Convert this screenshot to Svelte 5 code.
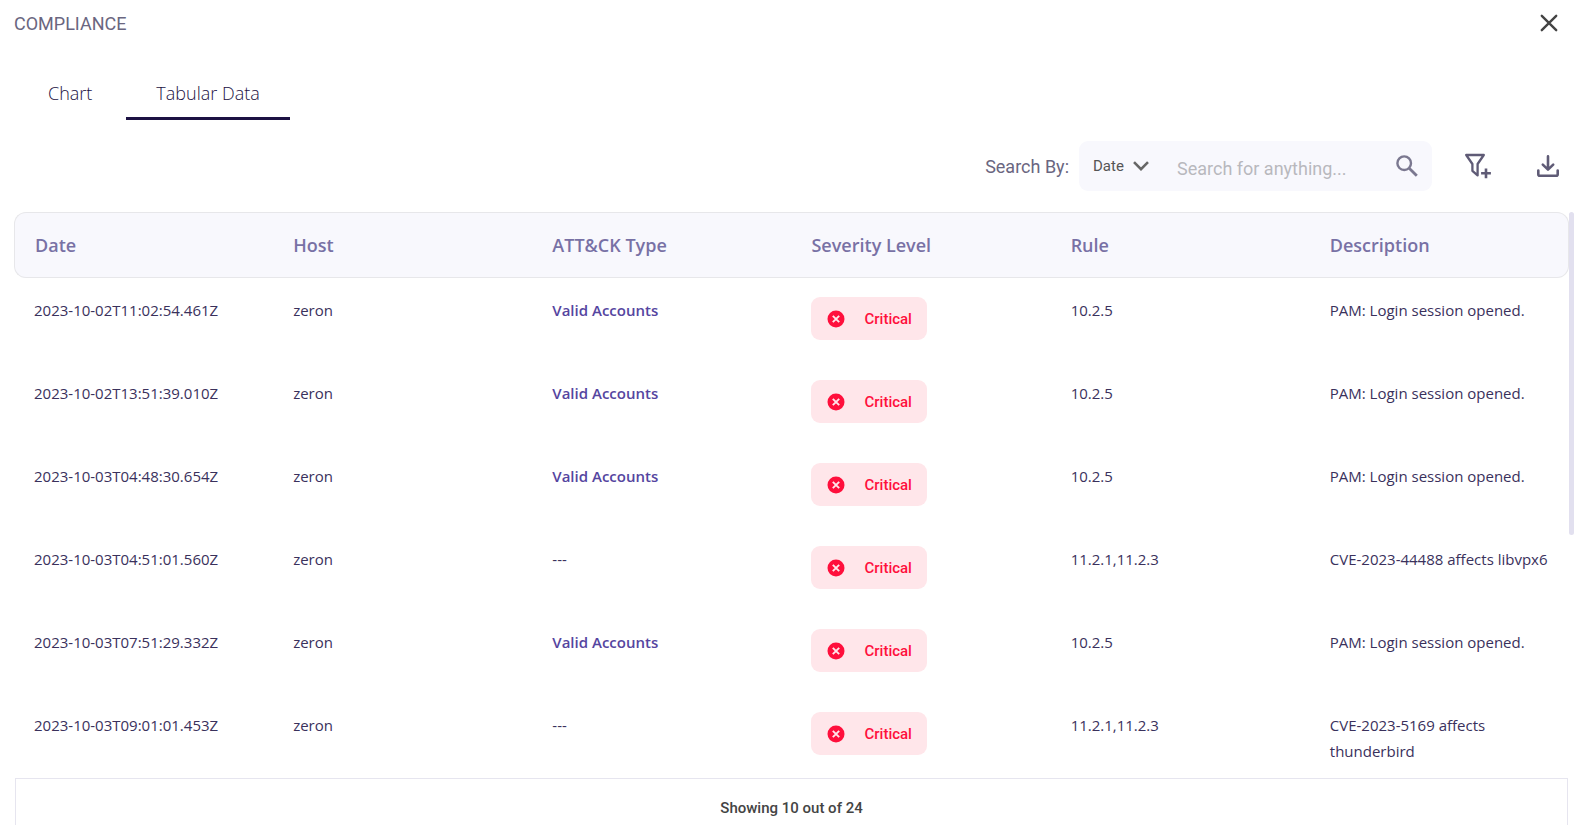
<script>
  const tabs = ['Chart', 'Tabular Data'];
  const columns = ['Date', 'Host', 'ATT&CK Type', 'Severity Level', 'Rule', 'Description'];

  const rows = [
    { date: '2023-10-02T11:02:54.461Z', host: 'zeron', type: 'Valid Accounts', severity: 'Critical', rule: '10.2.5', description: 'PAM: Login session opened.' },
    { date: '2023-10-02T13:51:39.010Z', host: 'zeron', type: 'Valid Accounts', severity: 'Critical', rule: '10.2.5', description: 'PAM: Login session opened.' },
    { date: '2023-10-03T04:48:30.654Z', host: 'zeron', type: 'Valid Accounts', severity: 'Critical', rule: '10.2.5', description: 'PAM: Login session opened.' },
    { date: '2023-10-03T04:51:01.560Z', host: 'zeron', type: null, severity: 'Critical', rule: '11.2.1,11.2.3', description: 'CVE-2023-44488 affects libvpx6' },
    { date: '2023-10-03T07:51:29.332Z', host: 'zeron', type: 'Valid Accounts', severity: 'Critical', rule: '10.2.5', description: 'PAM: Login session opened.' },
    { date: '2023-10-03T09:01:01.453Z', host: 'zeron', type: null, severity: 'Critical', rule: '11.2.1,11.2.3', description: 'CVE-2023-5169 affects thunderbird' }
  ];

  let activeTab = $state('Tabular Data');
  let searchBy = $state('Date');
  let query = $state('');
</script>

<div class="panel">
  <header class="panel-header">
    <h1>COMPLIANCE</h1>
    <button class="icon-btn" aria-label="Close">
      <svg width="18" height="18" viewBox="0 0 18 18" fill="none" stroke="#444" stroke-width="2.4" stroke-linecap="round">
        <path d="M1.8 1.8 16.2 16.2M16.2 1.8 1.8 16.2" />
      </svg>
    </button>
  </header>

  <nav class="tabs">
    {#each tabs as tab}
      <button class="tab" class:active={tab === activeTab} onclick={() => (activeTab = tab)}>{tab}</button>
    {/each}
  </nav>

  <div class="toolbar">
    <label for="search-by">Search By:</label>
    <div class="search-box">
      <div class="select-wrap">
        <select id="search-by" bind:value={searchBy}>
          <option>Date</option>
        </select>
        <svg width="16" height="10" viewBox="0 0 16 10" fill="none" stroke="#666" stroke-width="2.6">
          <path d="M1 1.2 8 8.2 15 1.2" />
        </svg>
      </div>
      <input type="text" aria-label="Search" placeholder="Search for anything..." bind:value={query} />
      <button class="icon-btn" aria-label="Search">
        <svg width="22" height="22" viewBox="0 0 22 22" fill="none" stroke="#7b7890" stroke-width="2.4">
          <circle cx="8.2" cy="8.2" r="6.8" />
          <path d="M13.2 13.2 20.8 20.8" stroke-width="2.8" />
        </svg>
      </button>
    </div>
    <button class="icon-btn filter" aria-label="Add filter">
      <svg width="28" height="26" viewBox="0 0 28 26" fill="none" stroke="#5f5b76" stroke-width="2.3">
        <path d="M2.2 2H19.8L13.6 11V22.4L8.4 17.8V11Z" stroke-linejoin="round" />
        <path d="M22 15.4V25.2M17.1 20.3H26.9" stroke-width="2.6" />
      </svg>
    </button>
    <button class="icon-btn" aria-label="Download">
      <svg width="22" height="22" viewBox="0 0 22 22" fill="none" stroke="#5f5b76" stroke-width="2.6" stroke-linecap="round" stroke-linejoin="round">
        <path d="M11 1.4V14M5.8 9.6 11 14.6 16.2 9.6" />
        <path d="M1.3 15.6V19.2Q1.3 20.7 2.8 20.7H19.2Q20.7 20.7 20.7 19.2V15.6" />
      </svg>
    </button>
  </div>

  <div class="table-area">
    <table>
      <thead>
        <tr>
          {#each columns as column}
            <th scope="col">{column}</th>
          {/each}
        </tr>
      </thead>
      <tbody>
        {#each rows as row}
          <tr>
            <td>{row.date}</td>
            <td>{row.host}</td>
            <td class:type={row.type}>{row.type ?? '---'}</td>
            <td>
              <span class="severity">
                <svg width="18" height="18" viewBox="0 0 18 18">
                  <circle cx="9" cy="9" r="8.5" fill="#ff0f3c" />
                  <path d="M5.8 5.8 12.2 12.2M12.2 5.8 5.8 12.2" stroke="#ffe6ea" stroke-width="1.9" />
                </svg>
                {row.severity}
              </span>
            </td>
            <td>{row.rule}</td>
            <td>{row.description}</td>
          </tr>
        {/each}
      </tbody>
    </table>
    <div class="scrollbar"><div class="thumb"></div></div>
  </div>

  <footer>Showing 10 out of 24</footer>
</div>

<style>
  :global(body) {
    margin: 0;
    background: #fff;
  }

  .panel {
    display: flex;
    flex-direction: column;
    height: 100vh;
    box-sizing: border-box;
    padding: 0 6px 0 14px;
    overflow: hidden;
    font-family: Roboto, sans-serif;
    color: #6a6680;
  }

  button,
  select,
  input {
    font: inherit;
    color: inherit;
    background: none;
    border: none;
    padding: 0;
    margin: 0;
    outline: none;
  }
  button { cursor: pointer; }

  .icon-btn { display: flex; }

  .panel-header {
    display: flex;
    justify-content: space-between;
    align-items: center;
    height: 46px;
    padding-right: 16px;
  }
  .panel-header h1 {
    margin: 0;
    font-size: 18px;
    font-weight: 400;
  }

  .tabs {
    display: flex;
    gap: 4px;
    margin: 22px 0 0 4px;
  }
  .tab {
    padding: 0 30px;
    height: 52px;
    border-bottom: 3px solid transparent;
    font-family: 'Open Sans', sans-serif;
    font-size: 18px;
    font-weight: 300;
    color: #1c1243;
  }
  .tab.active { border-bottom-color: #1c1243; }

  .toolbar {
    display: flex;
    justify-content: flex-end;
    align-items: center;
    margin: 21px 0;
    padding-right: 15px;
    font-size: 18px;
  }

  .search-box {
    display: flex;
    align-items: center;
    box-sizing: border-box;
    width: 353px;
    height: 50px;
    margin-left: 10px;
    padding: 0 14px;
    border-radius: 9px;
    background: #f8f8fd;
  }
  .select-wrap {
    display: flex;
    align-items: center;
    gap: 9px;
    color: #555;
  }
  .select-wrap select {
    appearance: none;
    font-size: 15px;
  }
  .search-box input {
    flex: 1;
    min-width: 0;
    margin-left: 28px;
    padding-top: 4px;
  }
  .search-box input::placeholder { color: #b8b8bd; }

  .filter { margin: 0 45px 0 32px; }

  .table-area {
    display: flex;
    align-items: flex-start;
    flex: 1;
    min-height: 0;
    overflow: hidden;
  }

  table {
    width: 100%;
    table-layout: fixed;
    border-collapse: separate;
    border-spacing: 0;
    font-family: 'Open Sans', sans-serif;
    color: #3a315c;
  }
  th,
  td {
    box-sizing: border-box;
    padding: 0 20px;
    text-align: left;
  }
  th {
    height: 66px;
    border: 1px solid #e7e7ea;
    border-width: 1px 0;
    background: #f8f8fd;
    font-size: 18px;
    font-weight: 600;
    color: #7871a5;
  }
  th:first-child {
    border-left-width: 1px;
    border-radius: 12px 0 0 12px;
  }
  th:last-child {
    border-right-width: 1px;
    border-radius: 0 12px 12px 0;
  }
  td {
    padding-top: 19px;
    padding-bottom: 21px;
    font-size: 15px;
    line-height: 26px;
    vertical-align: top;
  }
  .type {
    font-weight: 600;
    color: #5545a0;
  }

  .severity {
    display: flex;
    align-items: center;
    gap: 19px;
    box-sizing: border-box;
    width: 116px;
    height: 43px;
    padding-left: 16px;
    border-radius: 9px;
    background: #ffe6ea;
    font-family: Roboto, sans-serif;
    font-weight: 500;
    color: #ff0f3c;
  }

  .scrollbar {
    flex: none;
    width: 5px;
    height: 100%;
  }
  .thumb {
    height: 57%;
    border-radius: 3px;
    background: #e2e0ef;
  }

  footer {
    margin: 0 6px 0 1px;
    padding: 17px 0 5px;
    border: 1px solid #e6e5ef;
    border-bottom: none;
    font-size: 15px;
    font-weight: 500;
    line-height: 24px;
    text-align: center;
    color: #444;
  }
</style>
